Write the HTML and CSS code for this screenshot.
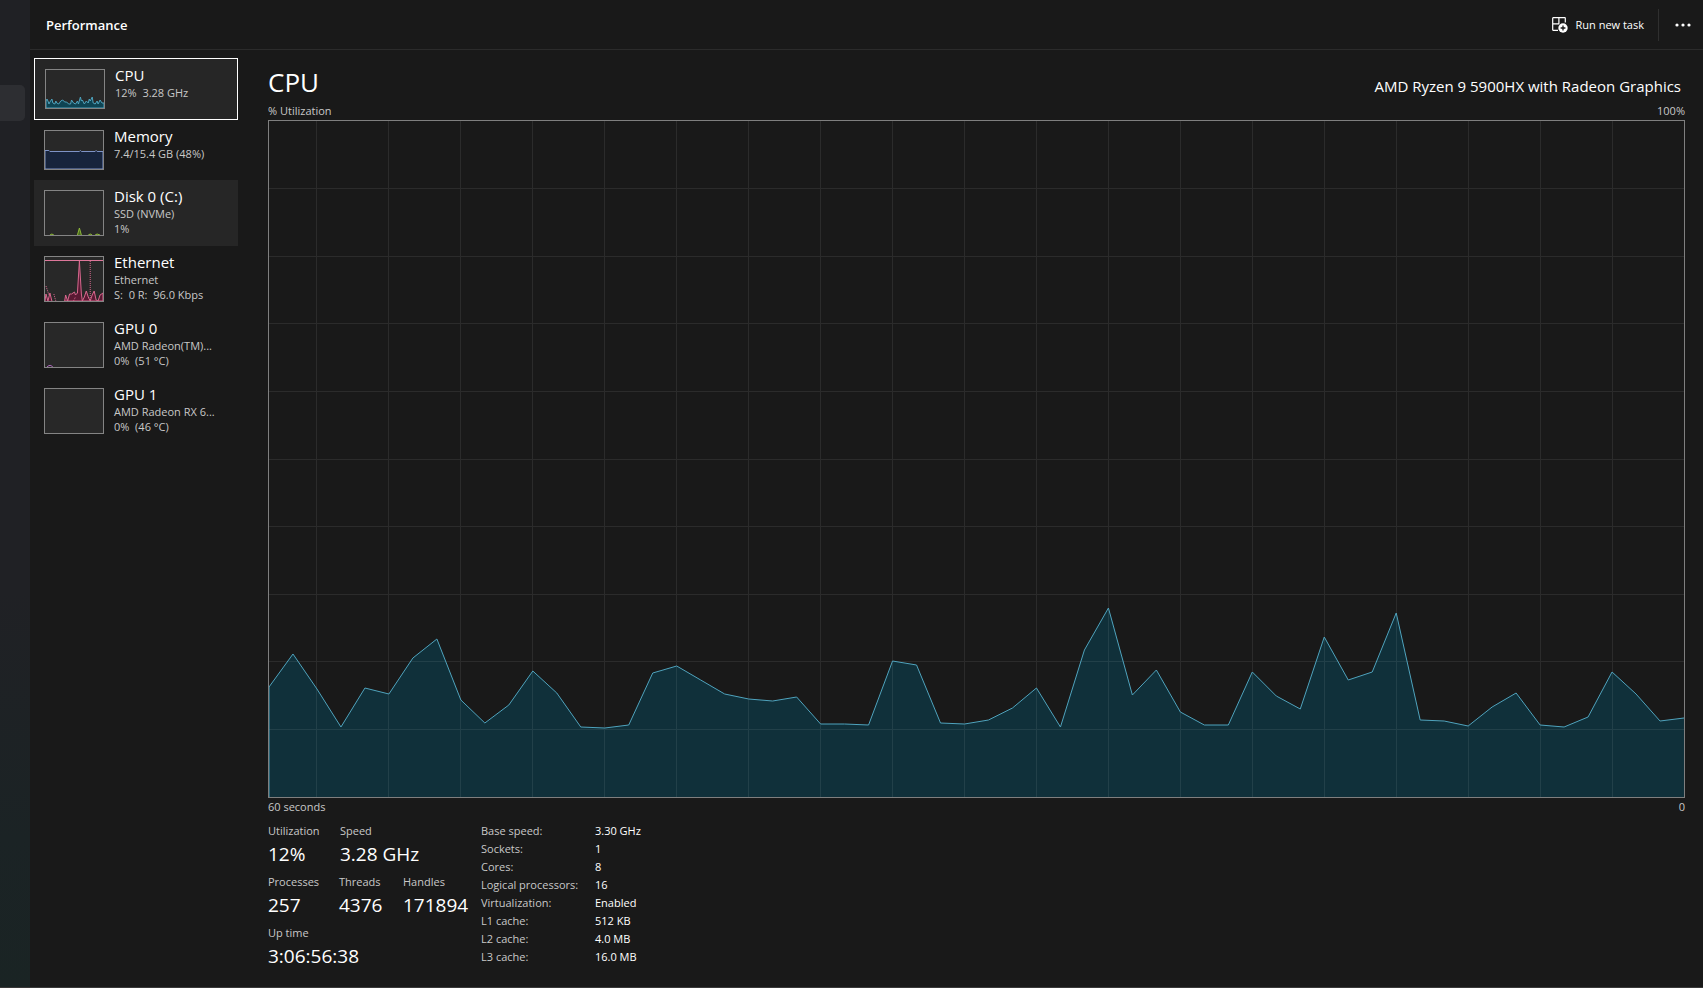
FILE: index.html
```html
<!DOCTYPE html>
<html lang="en">
<head>
    <meta charset="UTF-8">
    <meta name="viewport" content="width=device-width, initial-scale=1.0">
    <title>Performance</title>
    <link rel="stylesheet" href="styles.css">
</head>
<body>
    <div class="window">
        <nav class="rail" aria-label="Pages">
            <a href="#performance" class="rail_item" aria-label="Performance"></a>
        </nav>

        <div class="page">
            <header class="topbar">
                <h1 class="topbar_title">Performance</h1>
                <div class="topbar_actions">
                    <button type="button" class="btn_task">
                        <svg width="16" height="16" viewBox="0 0 16 16" fill="none">
                            <path d="M6 13.3H1.200a.5.5 0 0 1-.5-.5V1.200a.5.5 0 0 1 .5-.5h11.600a.5.5 0 0 1 .5.5V5.500M6.900.7v6M.7 6.800h6.600" stroke="#fff" stroke-width="1.200"/>
                            <circle cx="11" cy="11" r="4.700" fill="#fff"/>
                            <path d="M11 8.600v4.800M8.600 11h4.800" stroke="#191919" stroke-width="1.300"/>
                        </svg>
                        <span>Run new task</span>
                    </button>
                    <button type="button" class="btn_more" aria-label="More">
                        <svg width="16" height="4" viewBox="0 0 16 4" fill="#fff">
                            <circle cx="2" cy="2" r="1.6"/>
                            <circle cx="8" cy="2" r="1.6"/>
                            <circle cx="14" cy="2" r="1.6"/>
                        </svg>
                    </button>
                </div>
            </header>

            <div class="content">
                <!-- device list -->
                <div class="devices">
                    <button type="button" class="device device_short on">
                        <svg class="thumb" viewBox="0 0 59 38" preserveAspectRatio="none">
                            <path d="M0 31L1 29 2 31 3 34 4 32 6 29 7 33 9 34 10 31 11 33 13 34 15 31 17 30 19 32 21 32 23 34 25 34 26 30 28 33 30 34 32 31 33 34 35 27 36 31 37 30 39 34 41 31 43 33 44 29 45 31 47 27 48 33 50 34 52 31 53 34 55 30 57 33 59 33V38H0z" fill="#0e4453" stroke="#4fa3bd"/>
                        </svg>
                        <span class="device_text">
                            <span class="device_name">CPU</span>
                            <span class="device_info">12%&nbsp; 3.28 GHz</span>
                        </span>
                    </button>
                    <button type="button" class="device device_short">
                        <svg class="thumb" viewBox="0 0 59 38" preserveAspectRatio="none">
                            <path d="M0 19.500H4L5 20.500H35L36 19.500L37 20.500H51L52 19.500L53 20.500H59V38H0z" fill="#17243c" stroke="#8095c8"/>
                        </svg>
                        <span class="device_text">
                            <span class="device_name">Memory</span>
                            <span class="device_info">7.4/15.4 GB (48%)</span>
                        </span>
                    </button>
                    <button type="button" class="device hover">
                        <svg class="thumb" viewBox="0 0 59 44" preserveAspectRatio="none">
                            <path d="M5 44L7 43 9 44M33 44L35 37 37 44M44 44L46 43 48 44M51 44L53 43 56 44" fill="#4a6b1c" stroke="#8fb83a"/>
                        </svg>
                        <span class="device_text">
                            <span class="device_name">Disk 0 (C:)</span>
                            <span class="device_info">SSD (NVMe)</span>
                            <span class="device_info">1%</span>
                        </span>
                    </button>
                    <button type="button" class="device">
                        <svg class="thumb" viewBox="0 0 59 44" preserveAspectRatio="none">
                            <path d="M0 44L1 37 3 44 5 36 7 44M20 44L21 38 23 44 25 37 27 37 30 35 31 38 33 36 35 4 37 37 38 44 40 40 42 34 44 40 46 44 48 38 50 34 52 43 54 44 56 38 59 36V44z" fill="#5a1933" stroke="#d9688f"/>
                            <path d="M0 3.500H59" stroke="#e0789c"/>
                            <path d="M46 4V44M1 29L4 38M9 37L11 44M29 44L31 40" fill="none" stroke="#d9688f" stroke-dasharray="1 1"/>
                        </svg>
                        <span class="device_text">
                            <span class="device_name">Ethernet</span>
                            <span class="device_info">Ethernet</span>
                            <span class="device_info">S:&nbsp; 0 R:&nbsp; 96.0 Kbps</span>
                        </span>
                    </button>
                    <button type="button" class="device">
                        <svg class="thumb" viewBox="0 0 59 44" preserveAspectRatio="none">
                            <path d="M2 44L4 42.500H6L8 44" fill="none" stroke="#b06ac0"/>
                        </svg>
                        <span class="device_text">
                            <span class="device_name">GPU 0</span>
                            <span class="device_info">AMD Radeon(TM)...</span>
                            <span class="device_info">0%&nbsp; (51 °C)</span>
                        </span>
                    </button>
                    <button type="button" class="device">
                        <svg class="thumb" viewBox="0 0 59 44" preserveAspectRatio="none"></svg>
                        <span class="device_text">
                            <span class="device_name">GPU 1</span>
                            <span class="device_info">AMD Radeon RX 6...</span>
                            <span class="device_info">0%&nbsp; (46 °C)</span>
                        </span>
                    </button>
                </div>

                <main class="detail">
                    <div class="detail_head">
                        <h2 class="detail_title">CPU</h2>
                        <span class="detail_model">AMD Ryzen 9 5900HX with Radeon Graphics</span>
                    </div>
                    <div class="axis">
                        <span>% Utilization</span>
                        <span>100%</span>
                    </div>
                    <div class="chart">
                        <svg viewBox="0 0 1416 676" preserveAspectRatio="none">
                            <path class="area" id="area"/>
                            <path class="grid" id="grid"/>
                            <path class="line" id="line"/>
                        </svg>
                    </div>
                    <div class="axis">
                        <span>60 seconds</span>
                        <span>0</span>
                    </div>

                    <div class="stats">
                        <div class="stats_main">
                            <dl class="stats_row">
                                <div class="w_util"><dt>Utilization</dt><dd>12%</dd></div>
                                <div><dt>Speed</dt><dd>3.28 GHz</dd></div>
                            </dl>
                            <dl class="stats_row">
                                <div class="w_proc"><dt>Processes</dt><dd>257</dd></div>
                                <div class="w_thread"><dt>Threads</dt><dd>4376</dd></div>
                                <div><dt>Handles</dt><dd>171894</dd></div>
                            </dl>
                            <dl class="stats_row">
                                <div><dt>Up time</dt><dd>3:06:56:38</dd></div>
                            </dl>
                        </div>
                        <table class="specs">
                            <tr><th scope="row">Base speed:</th><td>3.30 GHz</td></tr>
                            <tr><th scope="row">Sockets:</th><td>1</td></tr>
                            <tr><th scope="row">Cores:</th><td>8</td></tr>
                            <tr><th scope="row">Logical processors:</th><td>16</td></tr>
                            <tr><th scope="row">Virtualization:</th><td>Enabled</td></tr>
                            <tr><th scope="row">L1 cache:</th><td>512 KB</td></tr>
                            <tr><th scope="row">L2 cache:</th><td>4.0 MB</td></tr>
                            <tr><th scope="row">L3 cache:</th><td>16.0 MB</td></tr>
                        </table>
                    </div>
                </main>
            </div>
        </div>
    </div>

    <script src="chart.js"></script>
</body>
</html>
```
FILE: styles.css
```css
* {
    box-sizing: border-box;
}
body {
    margin: 0;
    color: #fff;
    background: #191919;
    font-family: "Segoe UI", "Open Sans", "Noto Sans", sans-serif;
    font-size: 11px;
}
h1, h2, dl, dd {
    margin: 0;
    font-weight: 400;
}
button {
    padding: 0;
    border: 0;
    color: inherit;
    background: none;
    font: inherit;
    text-align: left;
}
.window {
    display: flex;
    min-height: 100vh;
    border-bottom: 1px solid #3a3a3a;
}

/* left rail */
.rail {
    flex: none;
    width: 30px;
    padding-top: 85px;
    background: linear-gradient(#202125, #202125 60%, #1b2325 85%, #1a2424);
}
.rail_item {
    display: block;
    width: 25px;
    height: 36px;
    border-radius: 0 5px 5px 0;
    background: #2d2e32;
}
.page {
    flex: 1;
    display: flex;
    flex-direction: column;
    min-width: 0;
}

/* top bar */
.topbar {
    display: flex;
    justify-content: space-between;
    align-items: center;
    height: 50px;
    padding-left: 16px;
    border-bottom: 1px solid #2b2b2b;
}
.topbar_title {
    font-size: 13px;
    font-weight: 600;
}
.topbar_actions {
    display: flex;
    align-items: center;
}
.btn_task {
    display: flex;
    align-items: center;
    gap: 8px;
    height: 32px;
    padding-right: 14px;
    border-right: 1px solid #2f2f2f;
    font-weight: 500;
}
.btn_more {
    display: flex;
    align-items: center;
    height: 32px;
    padding: 0 12px 0 16px;
}
.content {
    flex: 1;
    display: flex;
}

/* device list */
.devices {
    flex: none;
    width: 208px;
    padding: 8px 0 0 4px;
}
.device {
    display: flex;
    gap: 10px;
    width: 204px;
    height: 66px;
    padding: 10px;
}
.device_short {
    height: 60px;
}
.device.on {
    height: 62px;
    border: 1px solid #fff;
    background: #262626;
}
.device.hover {
    background: #262626;
}
.thumb {
    flex: none;
    width: 60px;
    height: 46px;
    border: 1px solid #848484;
    background: #282828;
}
.device_short .thumb {
    height: 40px;
}
.device_text {
    display: flex;
    flex-direction: column;
    margin-top: -4px;
    white-space: nowrap;
}
.device_name {
    font-size: 15px;
    line-height: 20px;
}
.device_info {
    color: #c8c8c8;
    line-height: 15px;
}

/* detail */
.detail {
    flex: 1;
    display: flex;
    flex-direction: column;
    min-width: 0;
    padding: 12px 18px 12px 30px;
}
.detail_head {
    display: flex;
    justify-content: space-between;
    align-items: baseline;
    height: 40px;
    padding-right: 4px;
}
.detail_title {
    font-size: 26px;
    line-height: 40px;
}
.detail_model {
    font-size: 15px;
}
.axis {
    display: flex;
    justify-content: space-between;
    color: #c8c8c8;
    line-height: 18px;
}
.chart {
    flex: 1;
    position: relative;
    border: 1px solid #7f7f7f;
}
/* the graph fills whatever height is left */
.chart svg {
    position: absolute;
    width: 100%;
    height: 100%;
}
.chart path {
    fill: none;
    vector-effect: non-scaling-stroke;
}
.chart .area {
    fill: #10303a;
}
.chart .grid {
    stroke: rgba(255, 255, 255, .08);
    shape-rendering: crispEdges;
}
.chart .line {
    stroke: #4fa3bd;
}

/* numbers under the graph */
.stats {
    display: flex;
    padding-top: 6px;
}
.stats_main {
    width: 213px;
}
.stats_row {
    display: flex;
    height: 51px;
}
.stats_row dt {
    color: #c8c8c8;
    line-height: 18px;
}
.stats_row dd {
    font-size: 19px;
    line-height: 28px;
    white-space: nowrap;
}
.w_util {
    width: 72px;
}
.w_proc {
    width: 71px;
}
.w_thread {
    width: 64px;
}
.specs {
    align-self: flex-start;
    border-collapse: collapse;
    line-height: 18px;
}
.specs th, .specs td {
    padding: 0;
    text-align: left;
    white-space: nowrap;
}
.specs th {
    width: 114px;
    color: #c8c8c8;
    font-weight: 400;
}
```
FILE: chart.js
```js
// depth below the top of the graph, one sample every 24 units
let samples = [
    566, 533, 568, 606, 567, 573, 537, 518, 579, 602, 584, 550, 572, 606, 607,
    604, 552, 545, 559, 573, 578, 580, 576, 603, 603, 604, 540, 544, 602, 603,
    599, 587, 567, 606, 529, 487, 574, 549, 591, 604, 604, 551, 575, 588, 516,
    559, 551, 492, 599, 600, 605, 586, 572, 604, 606, 596, 551, 573, 600, 597
]
let line = 'M' + samples.map((y, i) => i * 24 + ' ' + y).join('L')
let grid = ''

for (let x = 48; x < 1416; x += 72) {
    grid += 'M' + x + ' 0V676'
}
for (let i = 1; i < 10; i++) {
    grid += 'M0 ' + i * 67.6 + 'H1416'
}

document.querySelector('#line').setAttribute('d', 'M0 676V566' + line)
document.querySelector('#area').setAttribute('d', line + 'V676H0z')
document.querySelector('#grid').setAttribute('d', grid)
```
